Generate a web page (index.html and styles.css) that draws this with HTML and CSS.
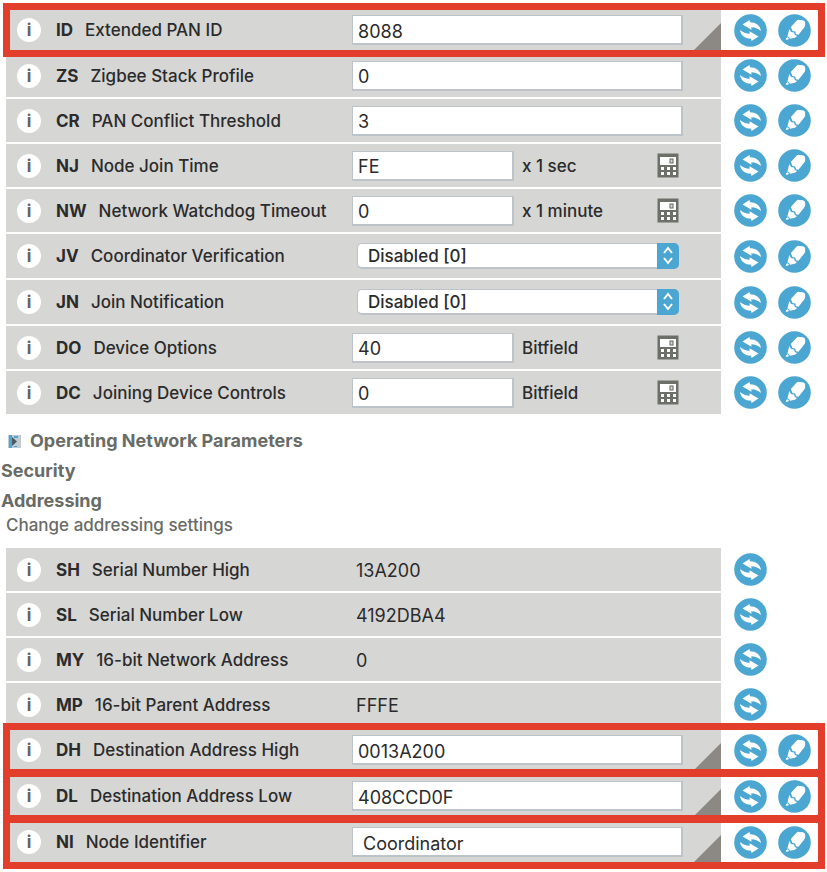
FILE: index.html
```html
<!DOCTYPE html>
<html lang="en">
<head>
<meta charset="utf-8">
<title>Radio configuration</title>
<link rel="stylesheet" href="styles.css">
</head>
<body>
<svg class="sprite" aria-hidden="true">
  <symbol id="refresh" viewBox="0 0 33 33">
    <circle cx="16.500" cy="16.500" r="16.300" fill="#4ba7d1"/>
    <path fill="#fff" d="M8.500 10.500 15.500 6l.5 2.300c5.500 0 10.300 3 11 8.700-2.700-2.200-6-3.600-9.700-3.700l.2 2.500zM24.500 22.500 17.500 27l-.5-2.300C11.500 24.700 6.700 21.700 6 16c2.700 2.200 6 3.600 9.700 3.700l-.2-2.500z"/>
  </symbol>
  <symbol id="write" viewBox="0 0 33 33">
    <circle cx="16.500" cy="16.500" r="16.300" fill="#4ba7d1"/>
    <path fill="#fff" d="M12.800 13 18.300 7q1.200-1.300 3-1.100l3.600.4q2.300.5 2.300 2.700v2.200q0 1-.8 2L20.500 20.800l-2.500-.6-.8-2.600-2.700-.5zM11.300 15l1.800 3 2.900.6.8 2.300 2.300 1-2.200 1.800-5 1-.8-1.700-1.700-.4zM9 23.200l1.300.5.600 1.400-2.200 1-1-.9z"/>
  </symbol>
  <symbol id="calc" viewBox="0 0 22 25">
    <rect x=".5" y=".5" width="21" height="24" fill="#6d7068"/>
    <path fill="#fff" d="M3 4h16v8H3zM4 14h3v3H4zM10 14h3v3h-3zM16 14h3v3h-3zM4 19h3v3H4zM10 19h3v3h-3zM16 19h3v3h-3z"/>
    <rect x="13" y="6" width="3" height="4" fill="#d6d6d5" stroke="#62665f"/>
  </symbol>
</svg>
<main>
  <section class="group" id="networking"></section>
  <nav class="sections">
    <h2 class="nested"><svg class="marker" viewBox="0 0 13 13" aria-hidden="true"><path fill="#c3cbd1" d="M0 0h13v13H0z"/><path fill="#4ba7d1" d="M1 0h3v13H1zM6 1h4v2H6zM6 11h3v1H6z"/><path fill="#4c5960" d="m4 2 5 4.500L4 11z"/></svg>Operating Network Parameters</h2>
    <h2>Security</h2>
    <h2>Addressing</h2>
    <p>Change addressing settings</p>
  </nav>
  <section class="group" id="addressing"></section>
</main>
<script src="app.js"></script>
</body>
</html>
```
FILE: styles.css
```css
* { box-sizing: border-box; }
body {
  margin: 0;
  background: #fff;
  color: #2b2b2b;
  font: 500 17px/20px Inter, "Liberation Sans", sans-serif;
}
main { padding: 8px 0 8px 6px; }
button { border: 0; padding: 0; background: none; font: inherit; color: inherit; }
svg { display: block; }
.sprite { position: absolute; width: 0; height: 0; }
.group { display: grid; gap: 2px; }
.row {
  position: relative;
  display: grid;
  grid-template-columns: 1fr 106px;
  min-height: 43px;
}
.row.marked, .row.choice { min-height: 44px; }
.row.marked::after {
  content: "";
  position: absolute;
  inset: -5px 2px -5px -3px;
  border: 7px solid #e33e2b;
  pointer-events: none;
  z-index: 1;
}
.setting {
  position: relative;
  display: grid;
  grid-template-columns: 346px 1fr;
  align-items: center;
  padding-right: 38px;
  background: #d6d6d5;
}
.name { display: flex; align-items: center; padding-left: 11px; }
.info {
  width: 24px;
  height: 24px;
  margin-right: 15px;
  border-radius: 50%;
  background: #fff;
  color: #62625e;
  font-weight: 700;
  line-height: 24px;
}
.name label { display: flex; gap: 12px; align-items: baseline; }
.name b { font-weight: 700; }
.value { display: flex; align-items: center; }
.value input {
  width: 100%;
  height: 30px;
  border: 1px solid #bcc4c9;
  border-width: 1px 2px 2px 1px;
  border-radius: 0;
  padding: 3px 4px 0 5px;
  background: #fff;
  color: inherit;
  font: inherit;
  font-size: 18px;
  font-weight: 400;
}
.value input.indent { padding-left: 10px; }
.value.short input { width: 162px; margin-right: 8px; }
.calc { width: 22px; height: 25px; margin: 0 4px 0 auto; }
.calc svg { width: 22px; height: 25px; }
.value output { padding: 2px 0 0 4px; font-size: 18px; font-weight: 400; }
.picker { position: relative; flex: 1; margin: 0 4px 0 5px; }
.picker select {
  appearance: none;
  display: block;
  width: 100%;
  height: 26px;
  padding: 0 30px 0 10px;
  border: 1px solid #bcc4c9;
  border-bottom-width: 2px;
  border-radius: 5px;
  background: #fff;
  color: inherit;
  font: inherit;
}
.picker svg {
  position: absolute;
  top: 0;
  right: 0;
  width: 22px;
  height: 26px;
  border-radius: 0 5px 5px 0;
  background: #4ba7d1;
  pointer-events: none;
}
.corner {
  position: absolute;
  right: 0;
  bottom: 0;
  width: 29px;
  height: 29px;
  background: #8c8883;
  clip-path: polygon(100% 0, 100% 100%, 0 100%);
}
.actions { display: flex; align-items: center; gap: 11px; padding-left: 13px; }
.actions svg { width: 33px; height: 33px; }
.sections { margin: 12px 0 14px -5px; color: #686b66; }
.sections h2 { display: flex; align-items: center; margin: 0; font-size: 18px; line-height: 30px; font-weight: 700; }
.sections .nested { padding-left: 7px; gap: 9px; }
.marker { width: 13px; height: 13px; }
.sections p { margin: 0 0 0 5px; line-height: 18px; }
```
FILE: app.js
```js
const networking = [
  { code: "ID", name: "Extended PAN ID", type: "text", value: "8088", marked: true },
  { code: "ZS", name: "Zigbee Stack Profile", type: "text", value: "0" },
  { code: "CR", name: "PAN Conflict Threshold", type: "text", value: "3" },
  { code: "NJ", name: "Node Join Time", type: "unit", value: "FE", unit: "x 1 sec" },
  { code: "NW", name: "Network Watchdog Timeout", type: "unit", value: "0", unit: "x 1 minute" },
  { code: "JV", name: "Coordinator Verification", type: "select", value: "Disabled [0]" },
  { code: "JN", name: "Join Notification", type: "select", value: "Disabled [0]" },
  { code: "DO", name: "Device Options", type: "unit", value: "40", unit: "Bitfield" },
  { code: "DC", name: "Joining Device Controls", type: "unit", value: "0", unit: "Bitfield" }
];
const addressing = [
  { code: "SH", name: "Serial Number High", type: "read", value: "13A200" },
  { code: "SL", name: "Serial Number Low", type: "read", value: "4192DBA4" },
  { code: "MY", name: "16-bit Network Address", type: "read", value: "0" },
  { code: "MP", name: "16-bit Parent Address", type: "read", value: "FFFE" },
  { code: "DH", name: "Destination Address High", type: "text", value: "0013A200", marked: true },
  { code: "DL", name: "Destination Address Low", type: "text", value: "408CCD0F", marked: true },
  { code: "NI", name: "Node Identifier", type: "text", value: "Coordinator", marked: true, indent: true }
];

const icon = (id) => `<svg aria-hidden="true"><use href="#${id}"/></svg>`;

function control(s) {
  if (s.type === "read") return `<div class="value"><output id="${s.code}">${s.value}</output></div>`;
  if (s.type === "select") {
    return `<div class="value"><div class="picker"><select id="${s.code}"><option>${s.value}</option></select>
      <svg viewBox="0 0 22 26" aria-hidden="true"><path d="m7 10 4-5 4 5M7 15l4 5 4-5" fill="none" stroke="#fff" stroke-width="2"/></svg></div></div>`;
  }
  const input = `<input type="text" id="${s.code}" value="${s.value}"${s.indent ? ' class="indent"' : ""}>`;
  if (s.type === "unit") {
    return `<div class="value short">${input}<span>${s.unit}</span><button class="calc" aria-label="Calculator">${icon("calc")}</button></div>`;
  }
  return `<div class="value">${input}</div>`;
}

function row(s) {
  const classes = ["row", s.marked && "marked", s.type === "select" && "choice"].filter(Boolean).join(" ");
  return `<div class="${classes}">
    <div class="setting">
      <div class="name"><button class="info" aria-label="About ${s.name}">i</button><label for="${s.code}"><b>${s.code}</b><span>${s.name}</span></label></div>
      ${control(s)}${s.marked ? '<span class="corner"></span>' : ""}
    </div>
    <div class="actions"><button aria-label="Read ${s.name}">${icon("refresh")}</button>${s.type === "read" ? "" : `<button aria-label="Write ${s.name}">${icon("write")}</button>`}</div>
  </div>`;
}

document.getElementById("networking").innerHTML = networking.map(row).join("");
document.getElementById("addressing").innerHTML = addressing.map(row).join("");
```
